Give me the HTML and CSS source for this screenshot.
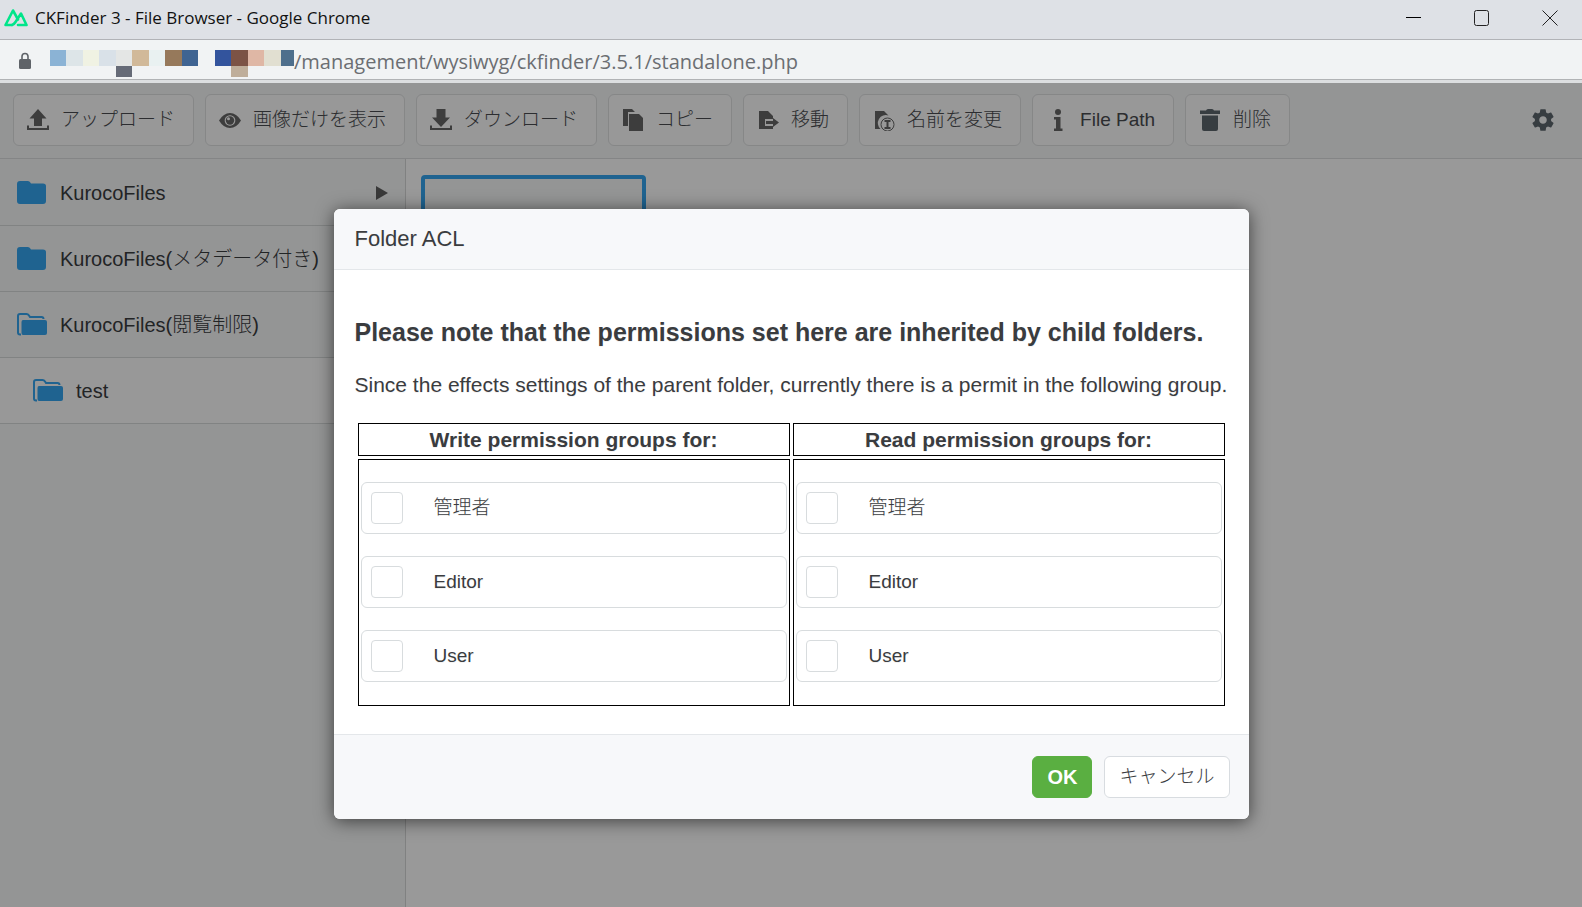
FILE: index.html
```html
<!DOCTYPE html>
<html lang="ja">
<head>
    <meta charset="UTF-8">
    <meta name="viewport" content="width=device-width, initial-scale=1.0">
    <title>CKFinder 3 - File Browser</title>
    <link rel="stylesheet" href="styles.css">
</head>
<body>
    <header class="titlebar">
        <svg class="app-logo" width="24" height="18" viewBox="0 0 24 18" fill="none" stroke="#00e58a" stroke-width="2.600" stroke-linejoin="round" stroke-linecap="round">
            <path d="M8 16H1.500L9 1.500L14 10.500"/>
            <path d="M8 16Q10 15.500 11.500 13L17 4.500L22.500 16H14"/>
        </svg>
        <span class="window-title">CKFinder 3 - File Browser - Google Chrome</span>
        <div class="window-controls">
            <button type="button" aria-label="Minimize"><svg width="16" height="16" viewBox="0 0 16 16"><path d="M0 7.500H15" stroke="#000"/></svg></button>
            <button type="button" aria-label="Maximize"><svg width="16" height="16" viewBox="0 0 16 16"><rect x=".5" y=".5" width="14" height="15" rx="2" fill="none" stroke="#222"/></svg></button>
            <button type="button" aria-label="Close"><svg width="16" height="16" viewBox="0 0 16 16"><path d="M.5 .5L15.500 15.500M15.500 .5L.5 15.500" stroke="#222"/></svg></button>
        </div>
    </header>

    <div class="addressbar">
        <svg class="lock" width="14" height="18" viewBox="0 0 14 18">
            <rect x="1" y="7" width="12" height="10" rx="1.500" fill="#5f6368"/>
            <path d="M4 7V4.500a3 3 0 0 1 6 0V7" fill="none" stroke="#5f6368" stroke-width="1.600"/>
        </svg>
        <svg class="host" width="244" height="28" viewBox="0 0 244 28" shape-rendering="crispEdges">
            <rect x="0" width="16" height="16" fill="#8bb3d5"/>
            <rect x="16" width="17" height="16" fill="#dde5e8"/>
            <rect x="33" width="16" height="16" fill="#f0f2e3"/>
            <rect x="49" width="17" height="16" fill="#d9e1e8"/>
            <rect x="66" width="16" height="16" fill="#e4e6e5"/>
            <rect x="82" width="17" height="16" fill="#d1b999"/>
            <rect x="99" width="16" height="16" fill="#e9f1f1"/>
            <rect x="115" width="17" height="16" fill="#96795b"/>
            <rect x="132" width="16" height="16" fill="#3f6492"/>
            <rect x="165" width="16" height="16" fill="#33549d"/>
            <rect x="181" width="17" height="16" fill="#7c5345"/>
            <rect x="198" width="16" height="16" fill="#dfb7a5"/>
            <rect x="214" width="17" height="16" fill="#e1dfd1"/>
            <rect x="231" width="13" height="16" fill="#4e6f8c"/>
            <rect x="66" y="16" width="16" height="11" fill="#666b77"/>
            <rect x="181" y="16" width="17" height="11" fill="#bfae9a"/>
        </svg>
        <span class="url">/management/wysiwyg/ckfinder/3.5.1/standalone.php</span>
    </div>

    <div class="app">
        <nav class="toolbar">
            <button type="button" class="tool">
                <svg class="icon" viewBox="0 0 22 22"><path d="M11 0L19.500 9.500H15V17H7V9.500H2.500Z"/><path class="line" d="M1 16.500V20H21V16.500"/></svg>
                アップロード
            </button>
            <button type="button" class="tool">
                <svg class="icon" viewBox="0 0 22 22"><path fill-rule="evenodd" d="M0 11.500Q4.500 4 11 4T22 11.500Q17.500 19 11 19T0 11.500ZM11 6.200a5.300 5.300 0 1 0 .01 0Z"/><circle cx="11" cy="11.500" r="4.200"/><circle cx="9.500" cy="9.800" r="1.500" fill="#fff"/></svg>
                画像だけを表示
            </button>
            <button type="button" class="tool">
                <svg class="icon" viewBox="0 0 22 22"><path d="M6.500 0H15.500V8.500H20L11 18L2 8.500H6.500Z"/><path class="line" d="M1 16.500V20H21V16.500"/></svg>
                ダウンロード
            </button>
            <button type="button" class="tool">
                <svg class="icon" viewBox="0 0 22 22"><path d="M1 0H10L13 3H6V17H1Z"/><path d="M7 5H17L21 9V22H7Z"/></svg>
                コピー
            </button>
            <button type="button" class="tool">
                <svg class="icon" viewBox="0 0 22 22"><path d="M2 2H11L16 7V10H8V17H16V20H2Z"/><path d="M9 12H16V9L22 13.500L16 18V15H9Z"/></svg>
                移動
            </button>
            <button type="button" class="tool">
                <svg class="icon" viewBox="0 0 22 22"><path d="M2 2H11L15.500 6.500A8 8 0 0 0 7.500 20H2Z"/><circle class="line thin" cx="14.500" cy="15.500" r="6.500"/><path class="line" d="M11.500 12H17.500M14.500 12V19M11.500 19H17.500"/></svg>
                名前を変更
            </button>
            <button type="button" class="tool">
                <svg class="icon" viewBox="0 0 22 22"><circle cx="12" cy="3" r="3"/><path d="M8 8H14.500V19.500H16.500V22H8V19.500H10V10.500H8Z"/></svg>
                File Path
            </button>
            <button type="button" class="tool">
                <svg class="icon trash" viewBox="0 0 22 22"><path d="M1 1.500H7Q7.500 0 9 0H13Q14.500 0 15 1.500H21V5H1Z"/><path d="M3 6.500H19V20Q19 22 17 22H5Q3 22 3 20Z"/></svg>
                削除
            </button>
            <button type="button" class="settings" aria-label="Settings">
                <svg width="26" height="26" viewBox="0 0 24 24" fill="#5d666d"><path d="M19.430 12.980c.04-.32.07-.64.07-.98s-.03-.66-.07-.98l2.110-1.650c.19-.15.24-.42.12-.64l-2-3.460c-.12-.22-.39-.3-.61-.22l-2.490 1c-.52-.4-1.080-.73-1.690-.98l-.38-2.650C14.460 2.180 14.250 2 14 2h-4c-.25 0-.46.18-.49.42l-.38 2.650c-.61.25-1.170.59-1.690.98l-2.490-1c-.23-.09-.49 0-.61.22l-2 3.460c-.13.22-.07.49.12.64l2.110 1.650c-.04.32-.07.65-.07.98s.03.66.07.98l-2.110 1.650c-.19.15-.24.42-.12.64l2 3.460c.12.22.39.3.61.22l2.490-1c.52.4 1.080.73 1.690.98l.38 2.650c.03.24.24.42.49.42h4c.25 0 .46-.18.49-.42l.38-2.650c.61-.25 1.170-.59 1.690-.98l2.490 1c.23.09.49 0 .61-.22l2-3.460c.12-.22.07-.49-.12-.64l-2.110-1.650zM12 15.500c-1.930 0-3.500-1.570-3.500-3.500s1.570-3.500 3.500-3.500 3.500 1.570 3.500 3.500-1.570 3.500-3.500 3.500z"/></svg>
            </button>
        </nav>

        <div class="workspace">
            <aside class="folders">
                <a href="#" class="folder">
                    <svg class="folder-icon" viewBox="0 0 30 24"><path d="M3 0H11Q13 0 14 2.500H26Q29 2.500 29 5V20Q29 23 26 23H3Q0 23 0 20V3Q0 0 3 0Z"/></svg>
                    <span>KurocoFiles</span>
                    <svg class="arrow" width="12" height="14" viewBox="0 0 12 14"><path d="M0 0L12 7L0 14Z"/></svg>
                </a>
                <a href="#" class="folder">
                    <svg class="folder-icon" viewBox="0 0 30 24"><path d="M3 0H11Q13 0 14 2.500H26Q29 2.500 29 5V20Q29 23 26 23H3Q0 23 0 20V3Q0 0 3 0Z"/></svg>
                    <span>KurocoFiles(メタデータ付き)</span>
                </a>
                <a href="#" class="folder">
                    <svg class="folder-icon" viewBox="0 0 30 24"><path class="outline" d="M4 21.500H3Q1 21.500 1 19.500V3Q1 1 3 1H9.500Q11 1 12 2.500L13 4H24.500Q26.500 4 26.500 6"/><path d="M6 7H28Q30 7 30 9V20Q30 22 28 22H6Q4.500 22 4.500 20V9Q4.500 7 6 7Z"/></svg>
                    <span>KurocoFiles(閲覧制限)</span>
                </a>
                <a href="#" class="folder child">
                    <svg class="folder-icon" viewBox="0 0 30 24"><path class="outline" d="M4 21.500H3Q1 21.500 1 19.500V3Q1 1 3 1H9.500Q11 1 12 2.500L13 4H24.500Q26.500 4 26.500 6"/><path d="M6 7H28Q30 7 30 9V20Q30 22 28 22H6Q4.500 22 4.500 20V9Q4.500 7 6 7Z"/></svg>
                    <span>test</span>
                </a>
            </aside>
            <main class="files">
                <div class="thumb"></div>
            </main>
        </div>

        <div class="overlay">
            <form class="dialog" role="dialog" aria-labelledby="dialog-title">
                <div class="dialog-header" id="dialog-title">Folder ACL</div>
                <div class="dialog-body">
                    <h2>Please note that the permissions set here are inherited by child folders.</h2>
                    <p>Since the effects settings of the parent folder, currently there is a permit in the following group.</p>
                    <table class="acl">
                        <thead>
                            <tr>
                                <th>Write permission groups for:</th>
                                <th>Read permission groups for:</th>
                            </tr>
                        </thead>
                        <tbody>
                            <tr>
                                <td>
                                    <div class="groups">
                                        <label class="group"><input type="checkbox" name="write">管理者</label>
                                        <label class="group"><input type="checkbox" name="write">Editor</label>
                                        <label class="group"><input type="checkbox" name="write">User</label>
                                    </div>
                                </td>
                                <td>
                                    <div class="groups">
                                        <label class="group"><input type="checkbox" name="read">管理者</label>
                                        <label class="group"><input type="checkbox" name="read">Editor</label>
                                        <label class="group"><input type="checkbox" name="read">User</label>
                                    </div>
                                </td>
                            </tr>
                        </tbody>
                    </table>
                </div>
                <div class="dialog-footer">
                    <button type="button" class="btn ok">OK</button>
                    <button type="button" class="btn">キャンセル</button>
                </div>
            </form>
        </div>
    </div>
</body>
</html>
```

FILE: styles.css
```css
* {
    box-sizing: border-box;
}

body {
    margin: 0;
    height: 100vh;
    display: flex;
    flex-direction: column;
    overflow: hidden;
    font-family: "Liberation Sans", "Noto Sans CJK JP", sans-serif;
    font-weight: 300;
    font-size: 19px;
    line-height: 24px;
    color: #3a3c3f;
}

button {
    font: inherit;
    color: inherit;
    cursor: pointer;
}

svg {
    display: block;
    flex: none;
}

/* Browser window */
.titlebar {
    height: 40px;
    flex: none;
    display: flex;
    align-items: center;
    padding: 0 24px 4px 4px;
    background: #dee1e6;
    border-bottom: 1px solid #b1b3b7;
}

.window-title {
    margin-left: 7px;
    font: 400 17px "Open Sans", sans-serif;
    color: #111;
}

.window-controls {
    margin-left: auto;
    display: flex;
    gap: 52px;
}

.window-controls button {
    border: 0;
    padding: 0;
    background: none;
}

.window-controls path {
    fill: none;
}

.addressbar {
    height: 43px;
    flex: none;
    display: flex;
    align-items: center;
    padding: 2px 18px 0;
    background: #f1f3f4;
    border-bottom: 3px solid #dcdee0;
    box-shadow: inset 0 -1px #b1b3b5;
}

.host {
    margin: 6px 0 0 18px;
}

.url {
    font: 400 20px "Open Sans", sans-serif;
    color: #6b6e72;
}

/* File browser */
.app {
    flex: 1;
    position: relative;
    display: flex;
    flex-direction: column;
    min-height: 0;
}

.toolbar {
    height: 76px;
    flex: none;
    display: flex;
    align-items: center;
    gap: 11px;
    padding: 0 26px 2px 13px;
    background: #f7f8f9;
    border-bottom: 1px solid #dcdedf;
}

.tool {
    height: 52px;
    display: flex;
    align-items: center;
    gap: 12px;
    padding: 0 18px 0 13px;
    background: #fdfdfd;
    border: 1px solid #dfe1e2;
    border-radius: 6px;
    white-space: nowrap;
    color: #4a4c50;
}

.icon {
    width: 22px;
    height: 22px;
    fill: #676767;
}

.icon .line {
    fill: none;
    stroke: #676767;
    stroke-width: 2;
}

.icon .thin {
    stroke-width: 1px;
}

.trash {
    fill: #5d666d;
}

.settings {
    margin-left: auto;
    border: 0;
    padding: 0;
    background: none;
}

.workspace {
    flex: 1;
    display: flex;
    min-height: 0;
}

.folders {
    width: 406px;
    flex: none;
    padding-top: 1px;
    background: #f7f8f9;
    border-right: 1px solid #d5d7d8;
}

.folder {
    height: 66px;
    display: flex;
    align-items: center;
    gap: 13px;
    padding: 0 17px;
    border-bottom: 1px solid #d8dadb;
    font-size: 20px;
    color: inherit;
    text-decoration: none;
}

.folder.child {
    padding-left: 33px;
    background: #fdfdfd;
}

.folder-icon {
    width: 30px;
    height: 24px;
    fill: #34a5f0;
}

.folder-icon .outline {
    fill: none;
    stroke: #34a5f0;
    stroke-width: 2;
}

.arrow {
    margin-left: auto;
    fill: #606060;
}

.files {
    flex: 1;
    padding: 16px 15px;
    background: #fff;
}

.thumb {
    width: 225px;
    height: 225px;
    background: #f7f8f9;
    border: 4px solid #34a5f0;
    border-radius: 4px;
}

/* Dialog */
.overlay {
    position: absolute;
    inset: 0;
    display: flex;
    justify-content: center;
    align-items: flex-start;
    padding: 126px 20px 0;
    background: rgba(0, 0, 0, 0.4);
}

.dialog {
    width: 100%;
    max-width: 915px;
    background: #fff;
    border-radius: 6px;
    box-shadow: 0 2px 18px rgba(0, 0, 0, 0.6);
    overflow: hidden;
    text-shadow: 0 1px 0 #f3f3f3;
}

.dialog-header {
    padding: 0 21px;
    font-size: 22px;
    line-height: 60px;
    background: #f7f8fa;
    border-bottom: 1px solid #e4e7ea;
}

.dialog-body {
    padding: 46px 21px 25px;
    font-size: 21px;
}

.dialog-body h2 {
    margin: 0;
    font-size: 25px;
    line-height: 32px;
}

.dialog-body p {
    margin: 22px 0 20px;
    line-height: 30px;
}

.acl {
    width: 100%;
    table-layout: fixed;
    border-collapse: separate;
    border-spacing: 3px;
}

.acl th,
.acl td {
    padding: 2px;
    border: 1px solid #000;
}

.acl th {
    height: 33px;
    line-height: 27px;
}

.groups {
    display: flex;
    flex-direction: column;
    gap: 22px;
    padding: 20px 0 21px;
}

.group {
    height: 52px;
    display: flex;
    align-items: center;
    gap: 31px;
    padding: 0 9px;
    border: 1px solid #d8dcde;
    border-radius: 6px;
    font-size: 19px;
}

.group input {
    appearance: none;
    width: 32px;
    height: 32px;
    margin: 0;
    background: #fff;
    border: 1px solid #d8dcde;
    border-radius: 4px;
}

.dialog-footer {
    display: flex;
    justify-content: flex-end;
    gap: 12px;
    padding: 21px 19px;
    background: #f7f8fa;
    border-top: 1px solid #e4e7ea;
}

.btn {
    height: 42px;
    padding: 0 14px;
    background: #fff;
    border: 1px solid #d8dce0;
    border-radius: 6px;
}

.btn.ok {
    background: #5aaf41;
    border-color: #5aaf41;
    color: #fff;
    font-size: 20px;
    font-weight: bold;
    text-shadow: none;
}
```
